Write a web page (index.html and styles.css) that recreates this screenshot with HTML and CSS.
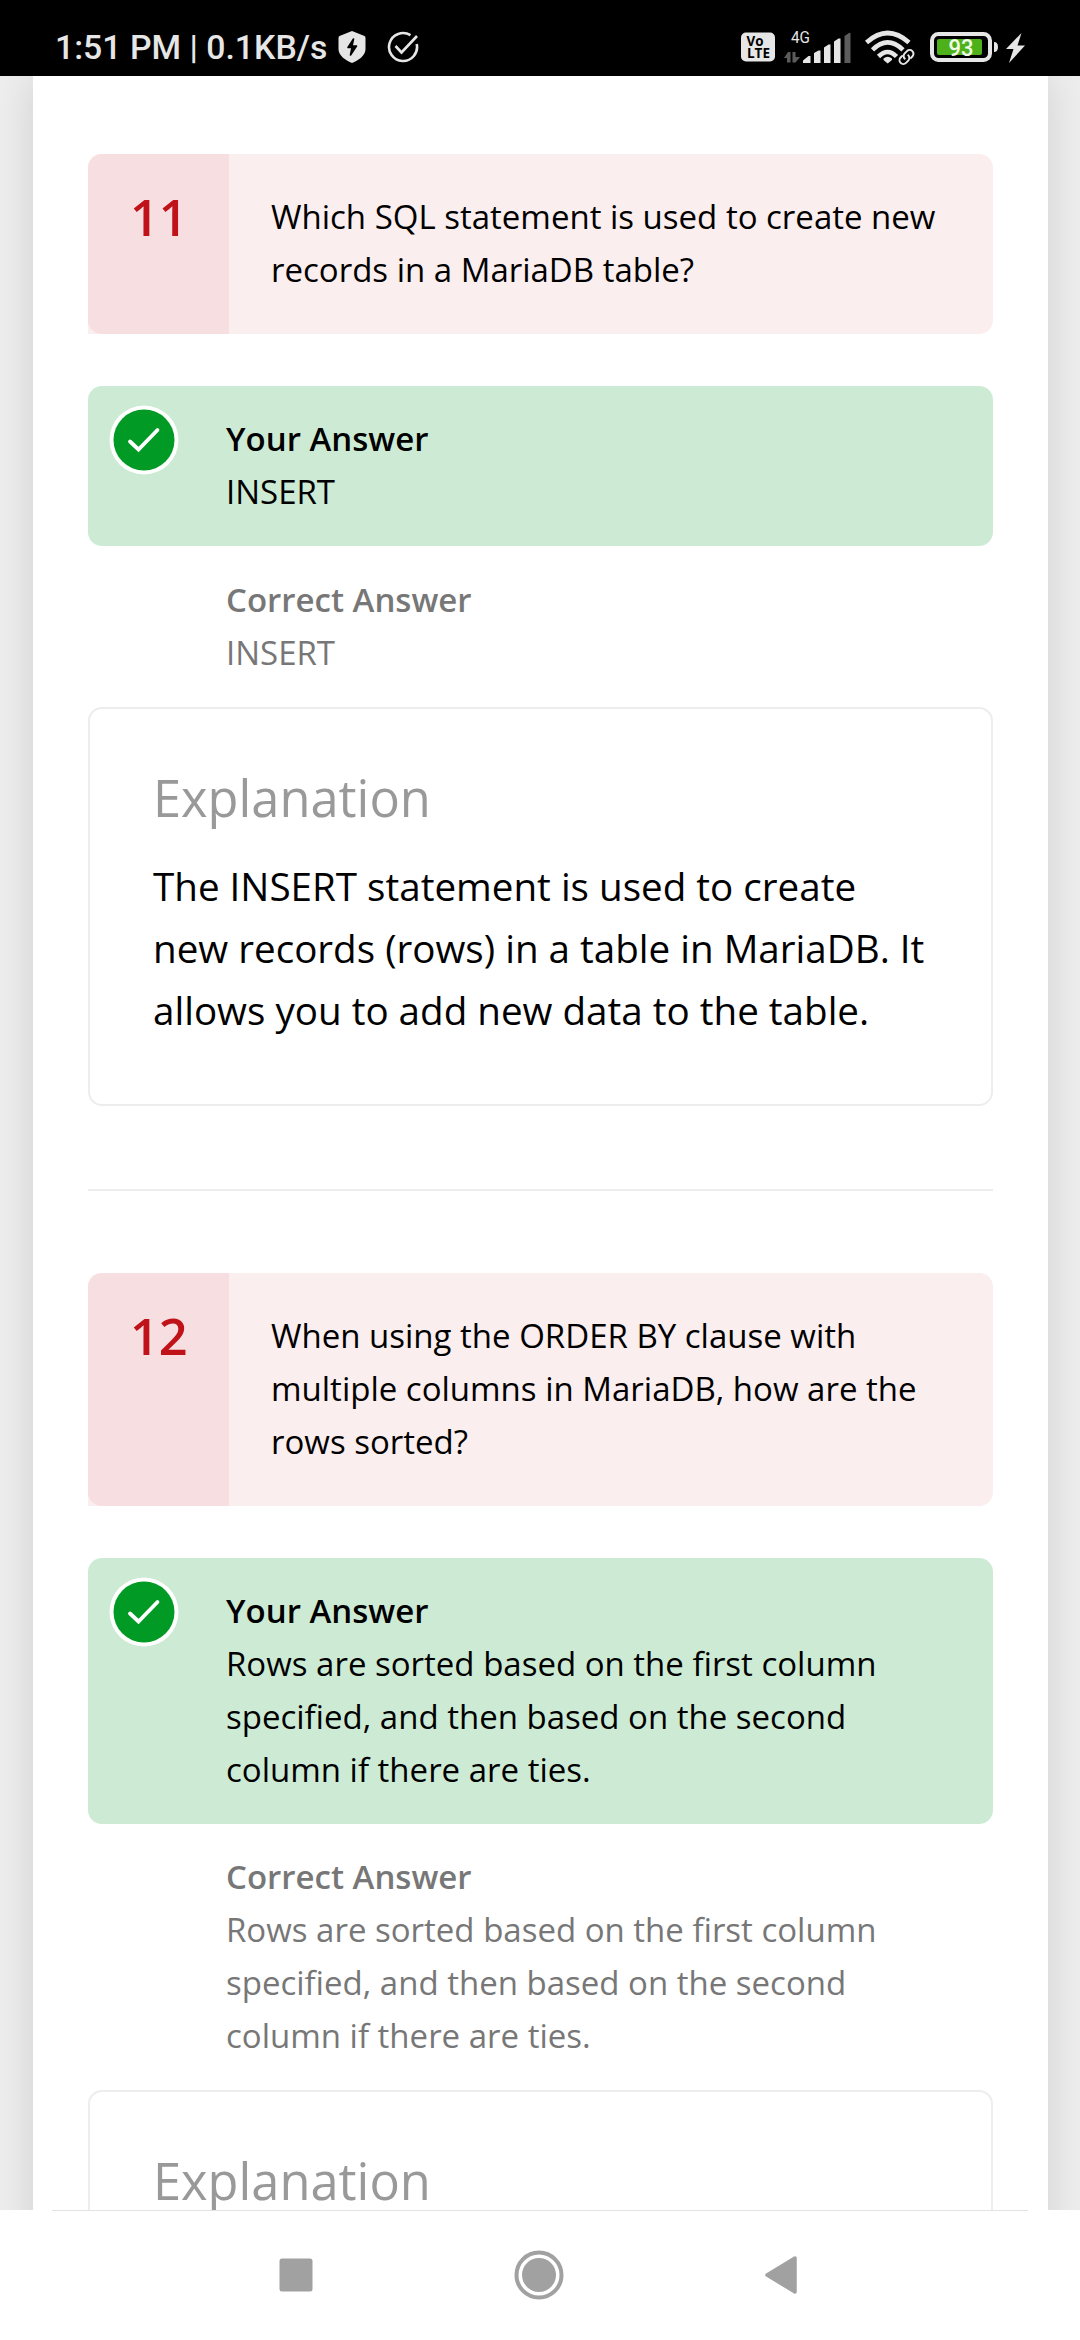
FILE: index.html
```html
<!DOCTYPE html>
<html lang="en">
<head>
<meta charset="utf-8">
<title>Quiz results</title>
<link rel="stylesheet" href="styles.css">
</head>
<body>
<div class="screen">
  <header class="status">
    <span class="clock">1:51 PM | 0.1KB/s</span>
    <svg class="shield" width="28" height="32" viewBox="0 0 28 32">
      <path d="M14 0 26.500 5Q27.500 5.500 27.500 7V18C27.500 25 20 29.500 14 32 8 29.500.5 25 .5 18V7Q.5 5.500 1.500 5Z" fill="#e6e6e6"/>
      <path d="M15.500 8 10 16.500h4L12.500 24l6-9h-4.500Z" fill="#000" stroke="#000" stroke-width="1.600" stroke-linejoin="round"/>
    </svg>
    <svg class="tick" width="32" height="32" viewBox="0 0 32 32" fill="none" stroke="#e6e6e6" stroke-width="2.600">
      <path d="M23.500 4.200A14 14 0 1 0 29.700 13"/>
      <path d="M8.500 15 14.500 21.500 30 5"/>
    </svg>
    <svg class="volte" width="34" height="30" viewBox="0 0 34 30">
      <rect width="34" height="29" y=".5" rx="5" fill="#e6e6e6"/>
      <text x="5.500" y="13.500" class="volte-text" textLength="17" lengthAdjust="spacingAndGlyphs">Vo</text>
      <text x="6" y="26" class="volte-text" textLength="23" lengthAdjust="spacingAndGlyphs">LTE</text>
    </svg>
    <svg class="signal" width="68" height="34" viewBox="0 0 68 34">
      <text x="7" y="12.500" class="net-text" textLength="19" lengthAdjust="spacingAndGlyphs">4G</text>
      <path d="M0 28 4 22H6.500V32.500H3V28Z M8.500 32.500V22H11.500V27H16L11.500 32.500Z" fill="#5c5c5c"/>
      <g fill="#e6e6e6">
        <path d="M19 33V30.500L24.500 26H26.500V33Z M30 33V23L34.500 20.500H36.500V33Z M40 33V17.500L44.500 14.500H46.500V33Z M50 33V11.500L54.500 8.500H56.500V33Z"/>
      </g>
      <path d="M60.500 33V6L65 3H66.500V33Z" fill="#5c5c5c"/>
    </svg>
    <svg class="wifi" width="50" height="36" viewBox="0 0 50 36" fill="none">
      <g stroke="#e6e6e6" stroke-width="4.600">
        <path d="M1.500 12.500Q22.600-6.500 44 12.500"/>
        <path d="M7.500 19.800Q22.600 5 38 19.800"/>
        <path d="M13.500 26.500Q22.600 17.500 31.500 26.500"/>
      </g>
      <path d="M18.500 28.500Q22.600 25 27 28.500V30L22.700 33.500 18.500 30Z" fill="#e6e6e6"/>
      <g stroke="#000" stroke-width="6"><path d="M37 31l8-8"/></g>
      <g transform="rotate(-45 41.500 27)" stroke="#e6e6e6" stroke-width="2">
        <path d="M40 23.200H37a3.800 3.800 0 0 0 0 7.600H40.500a3.800 3.800 0 0 0 3.400-4.600"/>
        <path d="M43 30.800H46a3.800 3.800 0 0 0 0-7.600H42.500a3.800 3.800 0 0 0-3.400 4.600"/>
      </g>
    </svg>
    <svg class="battery" width="68" height="30" viewBox="0 0 68 30">
      <rect x="2" y="2" width="58" height="26" rx="6.500" fill="none" stroke="#e6e6e6" stroke-width="4"/>
      <rect x="7" y="7" width="45" height="16" rx="2" fill="#4eb119"/>
      <path d="M64 10q4 0 4 5t-4 5Z" fill="#e6e6e6"/>
      <text x="18.500" y="23.500" class="level" textLength="25" lengthAdjust="spacingAndGlyphs">93</text>
    </svg>
    <svg class="bolt" width="20" height="30" viewBox="0 0 20 30">
      <path d="M15.500 0 0 16H7.500L3 30 19 12.500H11.500Z" fill="#e6e6e6"/>
    </svg>
  </header>

  <main class="viewport">
    <div class="page">
      <section class="item">
        <div class="question">
          <div class="number">11</div>
          <p class="prompt">Which SQL statement is used to create new<br>records in a MariaDB table?</p>
        </div>
        <div class="answer given">
          <svg class="mark" width="70" height="70" viewBox="0 0 70 70">
            <circle cx="35" cy="35" r="34.500" fill="#fff"/>
            <circle cx="35" cy="35" r="30.500" fill="#009a24"/>
            <path d="M21 36.500 29.500 44.500 48.500 25" fill="none" stroke="#fff" stroke-width="3.800" stroke-linecap="round"/>
          </svg>
          <div><b>Your Answer</b><p>INSERT</p></div>
        </div>
        <div class="answer correct">
          <div><b>Correct Answer</b><p>INSERT</p></div>
        </div>
        <div class="explanation">
          <h2>Explanation</h2>
          <p>The INSERT statement is used to create<br>new records (rows) in a table in MariaDB. It<br>allows you to add new data to the table.</p>
        </div>
      </section>
      <hr>
      <section class="item">
        <div class="question">
          <div class="number">12</div>
          <p class="prompt">When using the ORDER BY clause with<br>multiple columns in MariaDB, how are the<br>rows sorted?</p>
        </div>
        <div class="answer given">
          <svg class="mark" width="70" height="70" viewBox="0 0 70 70">
            <circle cx="35" cy="35" r="34.500" fill="#fff"/>
            <circle cx="35" cy="35" r="30.500" fill="#009a24"/>
            <path d="M21 36.500 29.500 44.500 48.500 25" fill="none" stroke="#fff" stroke-width="3.800" stroke-linecap="round"/>
          </svg>
          <div><b>Your Answer</b><p>Rows are sorted based on the first column<br>specified, and then based on the second<br>column if there are ties.</p></div>
        </div>
        <div class="answer correct">
          <div><b>Correct Answer</b><p>Rows are sorted based on the first column<br>specified, and then based on the second<br>column if there are ties.</p></div>
        </div>
        <div class="explanation">
          <h2>Explanation</h2>
        </div>
      </section>
    </div>
  </main>

  <nav class="navbar">
    <svg width="34" height="34" viewBox="0 0 34 34"><rect x=".5" y=".5" width="33" height="33" rx="2.500" fill="#a1a1a1"/></svg>
    <svg width="50" height="50" viewBox="0 0 50 50"><circle cx="25" cy="25" r="22.500" fill="none" stroke="#a1a1a1" stroke-width="4"/><circle cx="25" cy="25" r="17" fill="#a1a1a1"/></svg>
    <svg width="32" height="38" viewBox="0 0 32 38"><path d="M2 19 30 2V36Z" fill="#a1a1a1" stroke="#a1a1a1" stroke-width="3.500" stroke-linejoin="round"/></svg>
  </nav>
</div>
</body>
</html>
```
FILE: styles.css
```css
* { box-sizing: border-box; }
body, p, h2 { margin: 0; }
body { background: #fff; font-family: "Open Sans", sans-serif; color: #000; }
.screen { width: 1080px; height: 2340px; display: flex; flex-direction: column; overflow: hidden; }

.status { flex: none; height: 76px; background: #000; display: flex; align-items: flex-start; font-family: Roboto, sans-serif; }
.clock { margin: 26px 0 0 55px; width: 271px; font-size: 33.800px; line-height: 44px; font-weight: 500; color: #e6e6e6; white-space: nowrap; }
.shield { margin: 31px 0 0 12px; }
.tick { margin: 31px 0 0 21px; }
.volte { margin: 32px 0 0 auto; }
.signal { margin: 30px 0 0 9px; }
.wifi { margin: 30px 0 0 13px; }
.battery { margin: 32px 0 0 15px; }
.bolt { margin: 33px 54px 0 8px; }
.status svg { flex: none; }
.volte-text { font: 700 13.500px "Open Sans", sans-serif; fill: #000; }
.net-text { font: 400 17px Roboto, sans-serif; fill: #e6e6e6; }
.level { font: 500 23px Roboto, sans-serif; fill: #f2ffe9; }

.viewport { flex: none; height: 2134px; overflow: hidden; background: #eee; padding: 0 32px 0 33px; }
.page { height: 2400px; background: #fff; padding: 78px 55px 0; box-shadow: 0 0 41px rgba(0, 0, 0, .13); }

.question { display: flex; background: #fbeeee; border-radius: 14px 14px 14px 0; margin-bottom: 52px; }
.question { border-radius: 14px 14px 14px 0; }
.number { width: 141px; background: #f7dee1; border-radius: 14px 0 0 14px; padding: 23px 0 0 42px; font-size: 50.500px; line-height: 79px; font-weight: 600; color: #c01219; }
.question { border-bottom-left-radius: 0; border-bottom-right-radius: 14px; }
.prompt { padding: 36px 0 38px 42px; font-size: 33px; line-height: 53px; white-space: nowrap; }

.answer { position: relative; font-size: 33px; line-height: 53px; padding: 26px 0 28px 138px; white-space: nowrap; }
.answer b { display: block; font-weight: 600; }
.given { background: #cdebd4; border-radius: 14px; }
.mark { position: absolute; left: 21px; top: 19px; }
.correct { color: #777; }
.item:first-child .correct { padding-top: 27px; }

.explanation { border: 2px solid #ededed; border-radius: 14px; padding: 49px 0 63px 63px; white-space: nowrap; }
.explanation h2 { font-size: 50.600px; line-height: 79px; font-weight: 400; color: #999; margin-bottom: 18px; }
.explanation p { font-size: 38.600px; line-height: 62px; }
hr { border: 0; height: 2px; background: #ededed; margin: 83px 0 82px; }

.navbar { flex: none; position: relative; height: 130px; background: #fff; display: flex; align-items: center; justify-content: space-between; padding: 0 283px 0 279px; }
.navbar::before { content: ""; position: absolute; left: 52px; right: 52px; top: 0; height: 1px; background: #e3e3e3; }
```
